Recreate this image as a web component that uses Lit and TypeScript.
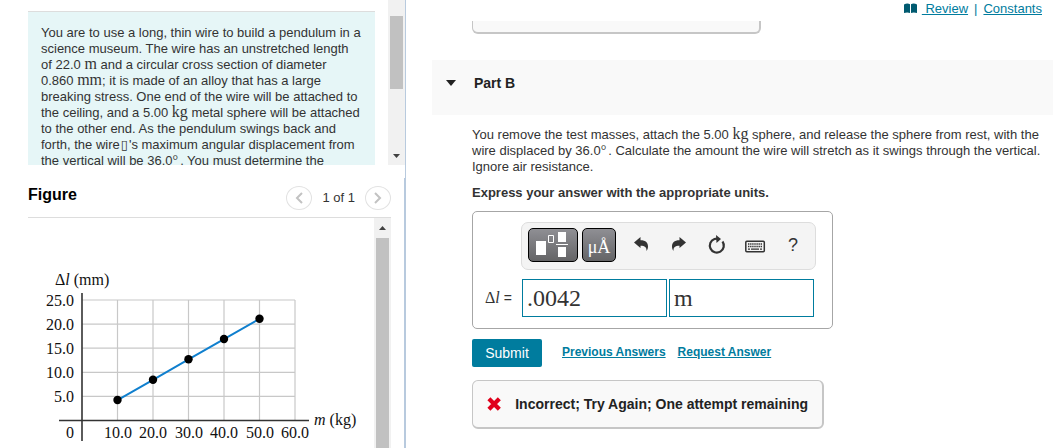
import { LitElement, html, css, svg } from "lit";
import { customElement, property, state } from "lit/decorators.js";

interface Reading {
  mass: number;
  stretch: number;
}

@customElement("stretch-chart")
class StretchChart extends LitElement {
  @property({ attribute: false }) readings: Reading[] = [];

  static styles = css`
    :host {
      display: block;
    }
    .chart {
      display: block;
      width: 346px;
      height: 260px;
      font-family: "Liberation Serif", serif;
      font-size: 16px;
      fill: #111;
    }
    .grid {
      stroke: #c8c8c8;
      stroke-width: 1.2;
    }
    .axis {
      stroke: #333;
      stroke-width: 1.6;
    }
    .line {
      fill: none;
      stroke: #0f7fce;
      stroke-width: 2;
    }
    .dot {
      fill: #000;
    }
    .end {
      text-anchor: end;
    }
    .mid {
      text-anchor: middle;
    }
    .var {
      font-style: italic;
    }
  `;

  private px(mass: number) {
    return 54 + mass * 3.55;
  }

  private py(stretch: number) {
    return 202.5 - stretch * 4.82;
  }

  render() {
    const xs = [10, 20, 30, 40, 50, 60];
    const ys = [5, 10, 15, 20, 25];
    const points = this.readings
      .map((r) => `${this.px(r.mass)},${this.py(r.stretch)}`)
      .join(" ");
    return html`<svg class="chart" viewBox="0 0 346 260" role="img" aria-label="Stretch against mass">
      ${ys.map(
        (y) => svg`<line class="grid" x1="54" x2=${this.px(60)} y1=${this.py(y)} y2=${this.py(y)}></line>
          <text class="end" x="46" y=${Math.round(this.py(y)) + 6}>${y.toFixed(1)}</text>`
      )}
      ${xs.map(
        (x) => svg`<line class="grid" x1=${this.px(x)} x2=${this.px(x)} y1=${this.py(25)} y2="202"></line>
          <text class="mid" x=${Math.round(this.px(x))} y="220">${x.toFixed(1)}</text>`
      )}
      <line class="axis" x1="54" x2="54" y1="75" y2="223"></line>
      <line class="axis" x1="31" x2="281" y1="202.5" y2="202.5"></line>
      <text class="end" x="46" y="220">0</text>
      <text x="27" y="67">Δ<tspan class="var">l</tspan> (mm)</text>
      <text x="286" y="207"><tspan class="var">m</tspan> (kg)</text>
      <polyline class="line" points=${points}></polyline>
      ${this.readings.map(
        (r) => svg`<circle class="dot" cx=${this.px(r.mass)} cy=${this.py(r.stretch)} r="4.2"></circle>`
      )}
    </svg>`;
  }
}

@customElement("app-root")
class AppRoot extends LitElement {
  @state() private amount = ".0042";
  @state() private unit = "m";

  private readings: Reading[] = [
    { mass: 10, stretch: 4.25 },
    { mass: 20, stretch: 8.45 },
    { mass: 30, stretch: 12.7 },
    { mass: 40, stretch: 16.9 },
    { mass: 50, stretch: 21.1 },
  ];

  static styles = css`
    :host {
      display: flex;
      height: 100vh;
      overflow: hidden;
      background: #fff;
      color: #333;
      font: 13px/16px "Liberation Sans", Arial, sans-serif;
    }
    * {
      box-sizing: border-box;
    }
    p,
    h2,
    h3 {
      margin: 0;
    }
    a {
      color: #007c9e;
    }
    button {
      font: inherit;
      color: inherit;
      cursor: pointer;
    }
    .side {
      flex: 0 0 406px;
      display: flex;
      flex-direction: column;
    }
    .intro {
      flex: 0 0 178px;
      min-height: 0;
      display: flex;
      padding-bottom: 13px;
      border-right: 1px solid #b8cade;
      overflow: hidden;
    }
    .introView {
      flex: 1;
      overflow: hidden;
      padding: 11px 13px 0 28px;
    }
    .introBox {
      background: #e6f6f7;
      border-top: 1px solid #ddd;
      padding: 13px 8px 13px 13px;
    }
    .track {
      flex: 0 0 17px;
      display: flex;
      flex-direction: column;
      align-items: center;
      background: #f1f1f1;
    }
    .thumb {
      width: 13px;
      background: #c1c1c1;
    }
    .introThumb {
      height: 73px;
      margin: 16px 0 auto;
    }
    .figureThumb {
      flex: 1;
    }
    .arrow {
      display: block;
      width: 7px;
      height: 4px;
      fill: #404040;
    }
    .arrowUp {
      margin: 8px 0;
    }
    .arrowDown {
      margin-bottom: 7px;
    }
    .figure {
      flex: 1;
      min-height: 0;
      display: flex;
      flex-direction: column;
      padding: 0 13px 0 28px;
      border-right: 2px solid #b8cade;
    }
    .figureHead {
      flex: 0 0 40px;
      display: flex;
      align-items: center;
      border-bottom: 1px solid #ddd;
    }
    .figureTitle {
      flex: 1;
      padding-bottom: 6px;
      color: #000;
      font-size: 16px;
      line-height: 20px;
    }
    .pager {
      display: flex;
      align-items: center;
      gap: 10px;
    }
    .round {
      display: grid;
      place-items: center;
      width: 26px;
      height: 24px;
      padding: 0;
      border: 1px solid #e2e2e2;
      border-radius: 50%;
      background: #fff;
    }
    .chevron {
      width: 8px;
      height: 12px;
      fill: none;
      stroke: #c2c2c2;
      stroke-width: 2;
    }
    .figureView {
      flex: 1;
      min-height: 0;
      display: flex;
    }
    .plot {
      flex: 1;
      overflow: hidden;
    }
    .math {
      font-family: "Liberation Serif", serif;
      font-size: 16px;
      line-height: 1px;
    }
    .deg {
      padding-right: 2px;
      font-family: "Liberation Serif", serif;
      font-size: 14px;
      line-height: 1px;
    }
    .tofu {
      padding: 0 1px;
      font-family: "DejaVu Sans", sans-serif;
      line-height: 1px;
    }
    .main {
      flex: 1;
      min-width: 0;
      display: flex;
      flex-direction: column;
      padding: 0 4px 0 26px;
    }
    .links {
      flex: 0 0 21px;
      display: flex;
      justify-content: flex-end;
      align-items: flex-start;
      gap: 6px;
      padding: 1px 11px 0 0;
      color: #007c9e;
    }
    .review {
      display: flex;
      gap: 5px;
      white-space: pre;
    }
    .book {
      width: 13px;
      height: 11px;
      margin-top: 2px;
      fill: #005a70;
    }
    .scroll {
      flex: 1;
      min-height: 0;
      overflow: hidden;
    }
    .previous {
      width: 289px;
      height: 13px;
      margin: 0 0 26px 40px;
      border: solid #c6c6c6;
      border-width: 0 2px 2px 1px;
      border-radius: 0 0 6px 6px;
      background: #f9f9f9;
    }
    .partHead {
      display: flex;
      align-items: center;
      gap: 18px;
      height: 55px;
      padding: 0 14px 10px;
      background: #f9f9f9;
      color: #222;
    }
    .partArrow {
      width: 10px;
      height: 6px;
      fill: #222;
    }
    .partTitle {
      font-size: 14px;
    }
    .body {
      padding: 12px 4px 0 40px;
    }
    .instruction {
      margin-top: 10px;
      font-weight: bold;
    }
    .answer {
      width: 361px;
      margin-top: 10px;
      padding: 10px 16px 11px 12px;
      border: 1px solid #a6a6a6;
      border-radius: 5px;
    }
    .toolbar {
      display: flex;
      align-items: center;
      height: 48px;
      margin: 0 0 9px 36px;
      padding: 0 6px;
      border: 1px solid #ddd;
      border-radius: 7px;
      background: #f4f4f4;
    }
    .dark {
      flex: none;
      display: grid;
      place-items: center;
      width: 34px;
      height: 34px;
      margin: 0 4px 2px 0;
      padding: 4px 0 0;
      border: 1px solid #000;
      border-radius: 5px;
      background: linear-gradient(#8f8f94, #646466);
      color: #fff;
      font-family: "Liberation Serif", serif;
      font-size: 18px;
      line-height: 24px;
    }
    .wide {
      width: 50px;
      padding: 0;
    }
    .template {
      width: 48px;
      height: 32px;
    }
    .tool {
      flex: none;
      display: grid;
      place-items: center;
      width: 38px;
      height: 34px;
      padding: 0;
      border: 0;
      background: none;
      color: #333;
      font-size: 18px;
    }
    .tools {
      display: flex;
      margin: 0 0 2px 2px;
    }
    .glyph {
      width: 22px;
      height: 20px;
      fill: #333;
    }
    .fields {
      display: flex;
      align-items: center;
      gap: 2px;
      margin-right: 2px;
    }
    .quantity {
      width: 35px;
      white-space: nowrap;
      font-size: 14px;
    }
    .var {
      font-style: italic;
    }
    .box {
      flex: 1;
      min-width: 0;
      height: 38px;
      padding: 0 4px;
      border: 1px solid #007c9e;
      border-radius: 0;
      outline: none;
      background: #fff;
      color: #333;
      font: 24px/32px "Liberation Serif", serif;
    }
    .actions {
      display: flex;
      align-items: center;
      gap: 12px;
      margin-top: 10px;
      font-size: 12px;
      font-weight: bold;
    }
    .submit {
      width: 70px;
      height: 28px;
      margin-right: 8px;
      padding: 0;
      border: 0;
      border-radius: 2px;
      background: #007c9e;
      color: #fff;
      font-size: 14px;
      font-weight: normal;
    }
    .actionLink {
      padding-bottom: 2px;
    }
    .feedback {
      display: flex;
      align-items: center;
      gap: 14px;
      width: 352px;
      height: 49px;
      margin-top: 13px;
      padding: 0 14px;
      border: solid #c6c6c6;
      border-width: 1px 2px 2px 1px;
      border-radius: 6px;
      background: #f9f9f9;
      color: #222;
      font-size: 14px;
      font-weight: bold;
      white-space: nowrap;
    }
    .cross {
      width: 15px;
      height: 14px;
      stroke: #e0001b;
      stroke-width: 4.5;
    }
  `;

  private get undoShape() {
    return svg`<path d="M4 7.500 10.500 2v3.300c5.500 0 7.500 2.700 7.500 6.200 0 1.800-.6 3.300-1.500 4.500.2-3.700-1.500-5.200-6-5.200V13z"></path>`;
  }

  render() {
    return html`
      <aside class="side">
        <section class="intro">
          <div class="introView">
            <p class="introBox">
              You are to use a long, thin wire to build a pendulum in a<br />science museum. The wire has an
              unstretched length<br />of 22.0 <span class="math">m</span> and a circular cross section of
              diameter<br />0.860 <span class="math">mm</span>; it is made of an alloy that has a large<br />breaking
              stress. One end of the wire will be attached to<br />the ceiling, and a 5.00
              <span class="math">kg</span> metal sphere will be attached<br />to the other end. As the pendulum
              swings back and<br />forth, the wire<span class="tofu">▯</span>'s maximum angular displacement
              from<br />the vertical will be 36.0<span class="deg">°</span>. You must determine the
            </p>
          </div>
          <div class="track">
            <div class="thumb introThumb"></div>
            <svg class="arrow arrowDown" viewBox="0 0 7 4"><path d="M0 0h7L3.500 4z"></path></svg>
          </div>
        </section>
        <section class="figure">
          <header class="figureHead">
            <h2 class="figureTitle">Figure</h2>
            <div class="pager">
              <button class="round" aria-label="Previous figure">
                <svg class="chevron" viewBox="0 0 8 12"><path d="M7 1 2 6l5 5"></path></svg>
              </button>
              <span>1 of 1</span>
              <button class="round" aria-label="Next figure">
                <svg class="chevron" viewBox="0 0 8 12"><path d="m1 1 5 5-5 5"></path></svg>
              </button>
            </div>
          </header>
          <div class="figureView">
            <stretch-chart class="plot" .readings=${this.readings}></stretch-chart>
            <div class="track">
              <svg class="arrow arrowUp" viewBox="0 0 7 4"><path d="M0 4h7L3.500 0z"></path></svg>
              <div class="thumb figureThumb"></div>
            </div>
          </div>
        </section>
      </aside>

      <main class="main">
        <nav class="links">
          <span class="review"
            ><svg class="book" viewBox="0 0 13 11">
              <path d="M0 1.500C2 .3 4.500.3 6 1.200V10C4.500 9.200 2 9.200 0 10zM7 1.200C8.500.3 11 .3 13 1.500V10c-2-.8-4.500-.8-6 0z"></path></svg
            ><a href="#review"> Review</a></span
          >
          <span>|</span>
          <a href="#constants">Constants</a>
        </nav>
        <div class="scroll">
          <div class="previous"></div>
          <header class="partHead">
            <svg class="partArrow" viewBox="0 0 10 6"><path d="M0 0h10L5 6z"></path></svg>
            <h3 class="partTitle">Part B</h3>
          </header>
          <div class="body">
            <p>
              You remove the test masses, attach the 5.00 <span class="math">kg</span> sphere, and release the
              sphere from rest, with the wire displaced by 36.0<span class="deg">°</span>. Calculate the amount
              the wire will stretch as it swings through the vertical. Ignore air resistance.
            </p>
            <p class="instruction">Express your answer with the appropriate units.</p>
            <div class="answer">
              <div class="toolbar">
                <button class="dark wide" aria-label="Templates">
                  <svg class="template" viewBox="0 0 48 32" fill="#fff">
                    <path d="M7 12h10v14H7zM29 3h8v10h-8zM29 18h8v10h-8zM27 15h12v1H27z"></path>
                    <path d="M19.500 6.500h5v7h-5z" fill="none" stroke="#fff"></path>
                  </svg>
                </button>
                <button class="dark" aria-label="Units">μÅ</button>
                <div class="tools">
                  <button class="tool" aria-label="Undo">
                    <svg class="glyph" viewBox="0 0 22 20">${this.undoShape}</svg>
                  </button>
                  <button class="tool" aria-label="Redo">
                    <svg class="glyph" viewBox="0 0 22 20"><g transform="matrix(-1 0 0 1 22 0)">${this.undoShape}</g></svg>
                  </button>
                  <button class="tool" aria-label="Reset">
                    <svg class="glyph" viewBox="0 0 22 20">
                      <path d="M16.500 6.500A7 7 0 1 1 8.500 4L11 3.700" fill="none" stroke="#333" stroke-width="2.200"></path>
                      <path d="M10 0 15 4 10.500 8z"></path>
                    </svg>
                  </button>
                  <button class="tool" aria-label="Keyboard">
                    <svg class="glyph" viewBox="0 0 22 20">
                      <rect x="1.800" y="6.300" width="18.500" height="10.500" rx="1" fill="none" stroke="#333" stroke-width="1.500"></rect>
                      <path d="M4 9h14M4 11.500h14" fill="none" stroke="#333" stroke-width="1.300" stroke-dasharray="1.400 .7"></path>
                      <path d="M4 13.500h2v1.300H4zM7 13.500h8v1.300H7zM16 13.500h2v1.300h-2z"></path>
                    </svg>
                  </button>
                  <button class="tool" aria-label="Help">?</button>
                </div>
              </div>
              <div class="fields">
                <label class="quantity" for="amount"
                  ><span class="math">Δ<span class="var">l</span></span> =</label
                >
                <input
                  class="box"
                  id="amount"
                  .value=${this.amount}
                  @input=${(e: Event) => (this.amount = (e.target as HTMLInputElement).value)}
                />
                <input
                  class="box"
                  id="unit"
                  aria-label="Units"
                  .value=${this.unit}
                  @input=${(e: Event) => (this.unit = (e.target as HTMLInputElement).value)}
                />
              </div>
            </div>
            <div class="actions">
              <button class="submit">Submit</button>
              <a class="actionLink" href="#previous">Previous Answers</a>
              <a class="actionLink" href="#request">Request Answer</a>
            </div>
            <div class="feedback" role="status">
              <svg class="cross" viewBox="0 0 15 14"><path d="m2 1.500 11 11m0-11-11 11"></path></svg>
              <span>Incorrect; Try Again; One attempt remaining</span>
            </div>
          </div>
        </div>
      </main>
    `;
  }
}
